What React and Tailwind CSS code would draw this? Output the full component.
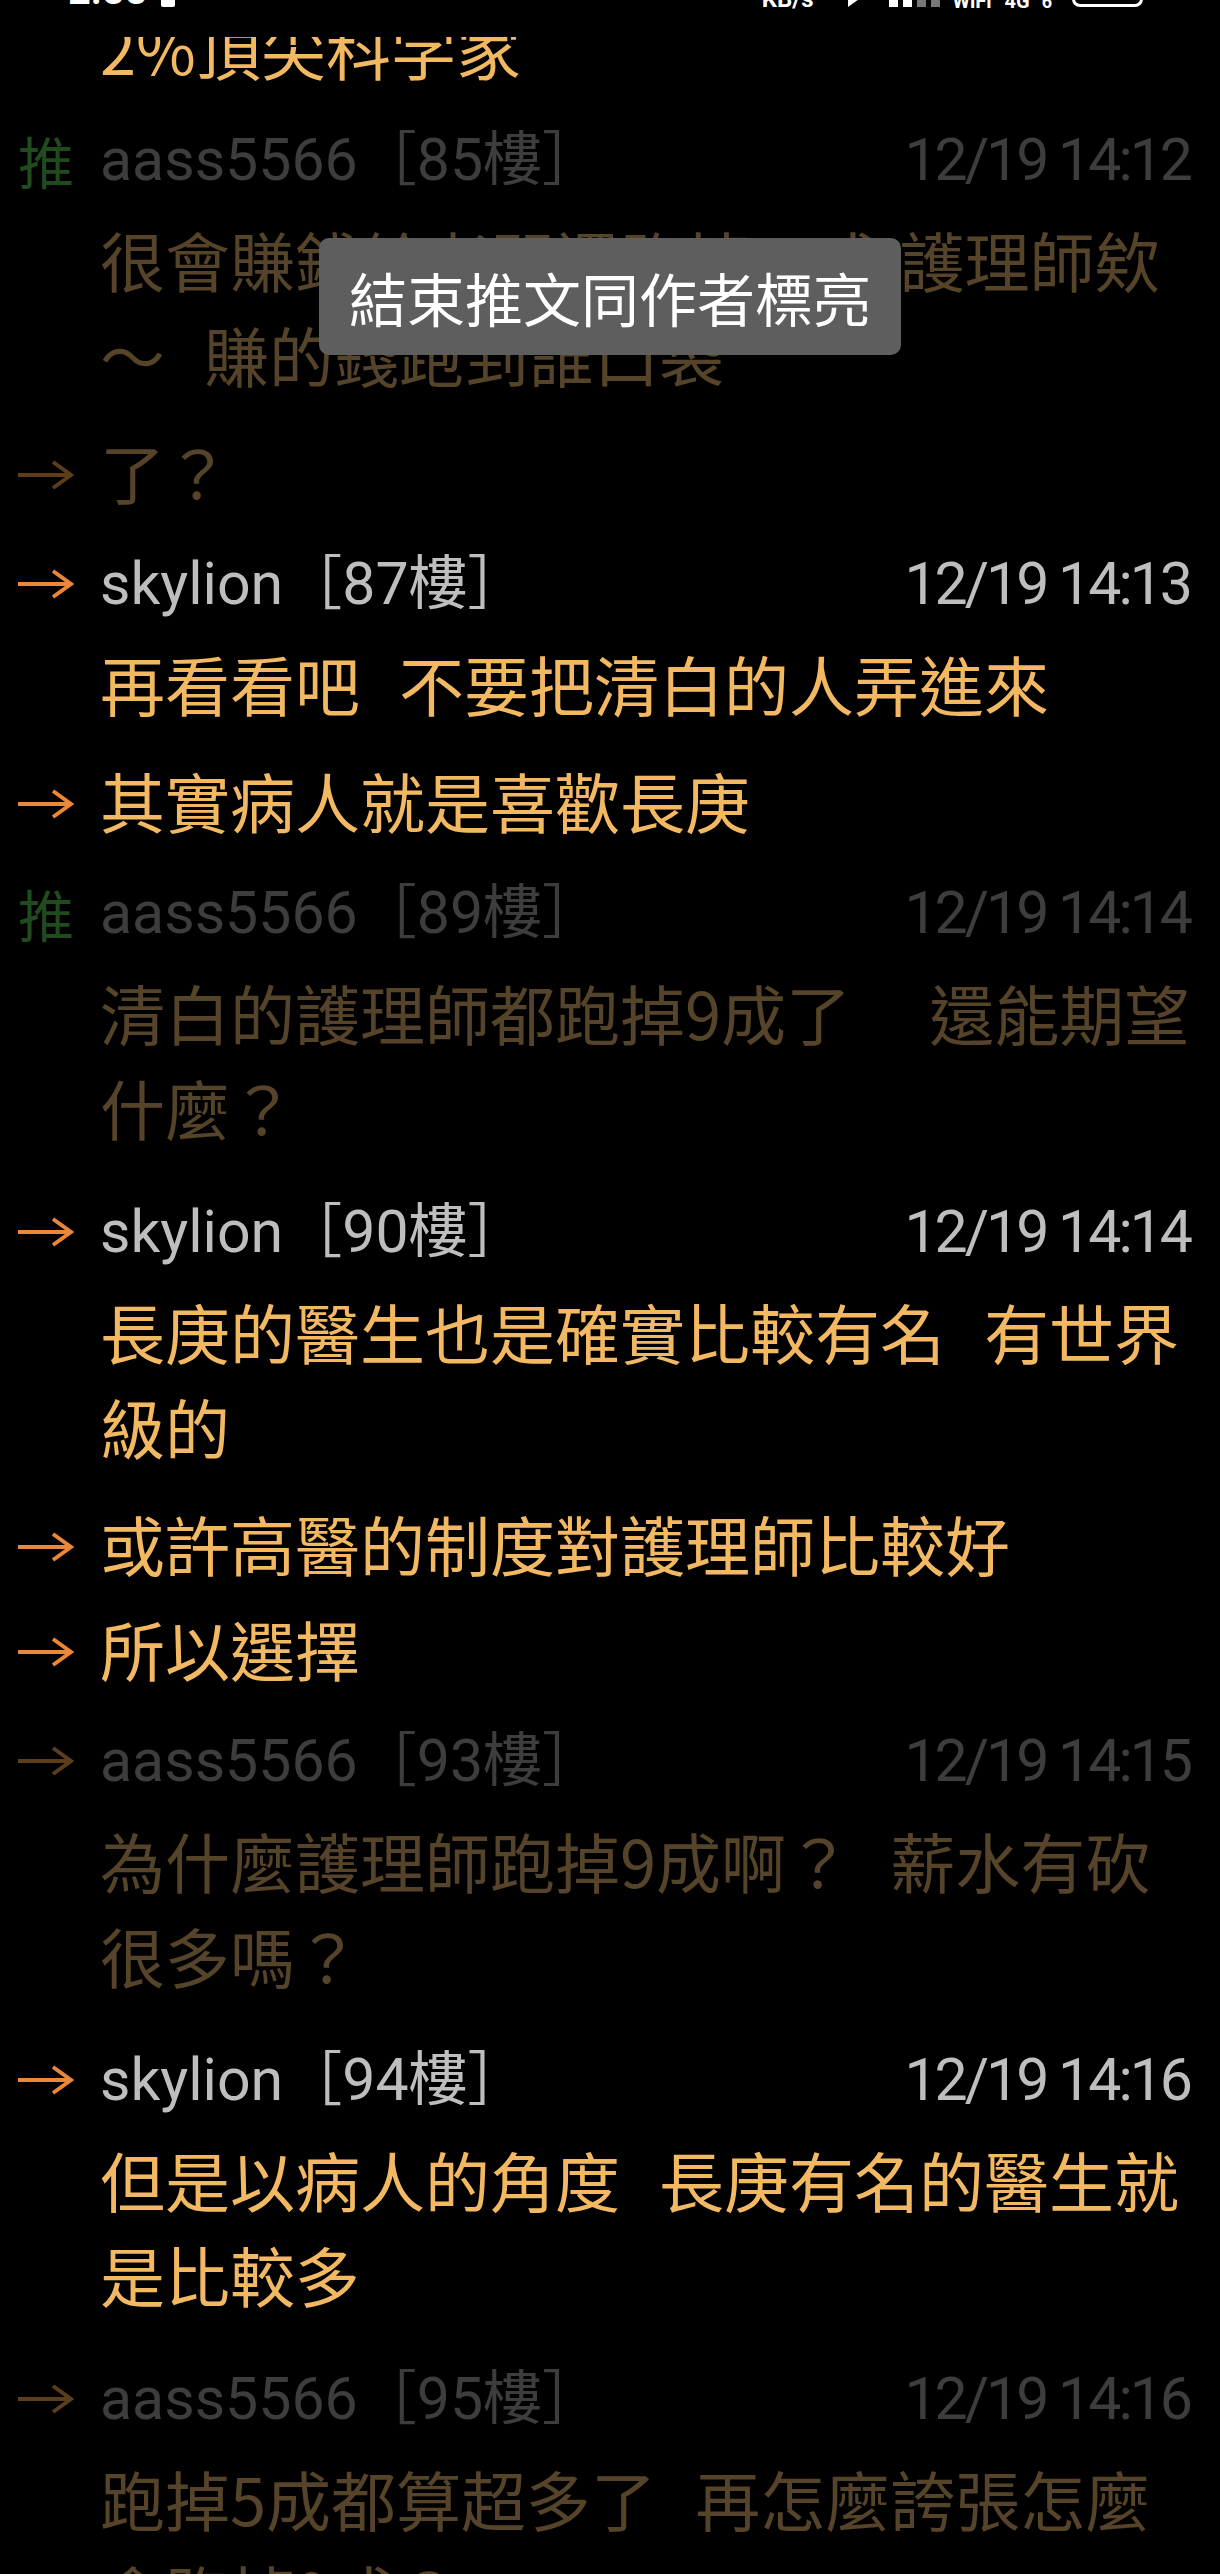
import React from "react";

const CJK = "font-['Noto_Sans_CJK_TC',sans-serif]";
const HEAD = "font-['Roboto','Noto_Sans_CJK_TC',sans-serif]";

// 推文列表：post = 有標頭的推文，cont = 接續的 → 行
const FEED = [
  { type: "cont", mark: null, dim: false, text: "2%頂尖科学家" },
  {
    type: "post",
    mark: "推",
    dim: true,
    user: "aass5566",
    floor: 85,
    time: "12/19 14:12",
    text: "很會賺錢給老闆還跑掉一成 護理師欸～  賺的錢跑到誰口袋",
  },
  { type: "cont", mark: "→", dim: true, text: "了？" },
  {
    type: "post",
    mark: "→",
    dim: false,
    user: "skylion",
    floor: 87,
    time: "12/19 14:13",
    text: "再看看吧  不要把清白的人弄進來",
  },
  { type: "cont", mark: "→", dim: false, text: "其實病人就是喜歡長庚" },
  {
    type: "post",
    mark: "推",
    dim: true,
    user: "aass5566",
    floor: 89,
    time: "12/19 14:14",
    text: "清白的護理師都跑掉9成了    還能期望什麼？",
  },
  {
    type: "post",
    mark: "→",
    dim: false,
    user: "skylion",
    floor: 90,
    time: "12/19 14:14",
    text: "長庚的醫生也是確實比較有名  有世界級的",
  },
  { type: "cont", mark: "→", dim: false, text: "或許高醫的制度對護理師比較好" },
  { type: "cont", mark: "→", dim: false, text: "所以選擇" },
  {
    type: "post",
    mark: "→",
    dim: true,
    user: "aass5566",
    floor: 93,
    time: "12/19 14:15",
    text: "為什麼護理師跑掉9成啊？  薪水有砍很多嗎？",
  },
  {
    type: "post",
    mark: "→",
    dim: false,
    user: "skylion",
    floor: 94,
    time: "12/19 14:16",
    text: "但是以病人的角度  長庚有名的醫生就是比較多",
  },
  {
    type: "post",
    mark: "→",
    dim: true,
    user: "aass5566",
    floor: 95,
    time: "12/19 14:16",
    text: "跑掉5成都算超多了  再怎麼誇張怎麼會跑掉9成？",
  },
];

function Arrow({ dim }) {
  return (
    <svg
      width="56"
      height="30"
      viewBox="0 0 56 30"
      fill="none"
      strokeWidth="4"
      className={dim ? "stroke-[#5c3f1a]" : "stroke-[#ec8737]"}
    >
      <path d="M0 15H53M35 2L53 15L35 28" />
    </svg>
  );
}

function Marker({ mark, dim }) {
  if (!mark) return null;
  if (mark === "推") {
    return <span className={`${CJK} text-[56px] leading-none text-[#1f4b1f]`}>推</span>;
  }
  return <Arrow dim={dim} />;
}

function Body({ text, dim, className = "" }) {
  return (
    <p
      className={`${CJK} ${className} whitespace-pre-wrap text-[65px] leading-[95px] [word-spacing:5px] ${
        dim ? "text-[#55432a]" : "text-[#f3b862]"
      }`}
    >
      {text}
    </p>
  );
}

function Post({ item }) {
  return (
    <div className="flex pt-[15px] pb-[22px]">
      <div className="flex h-[80px] w-[100px] shrink-0 items-center pl-[18px]">
        <Marker mark={item.mark} dim={item.dim} />
      </div>
      <div className="min-w-0 flex-1 pr-[20px]">
        <div
          className={`${HEAD} flex h-[80px] items-center justify-between pr-[10px] text-[59px] leading-[80px] ${
            item.dim ? "text-[#3d3d3d]" : "text-[#bebebe]"
          }`}
        >
          <span>
            {item.user}［{item.floor}樓］
          </span>
          <span className="tracking-[-3px]">{item.time}</span>
        </div>
        <Body text={item.text} dim={item.dim} className="mt-[12px]" />
      </div>
    </div>
  );
}

function Cont({ item }) {
  return (
    <div className="flex pb-[10px]">
      <div className="flex h-[95px] w-[100px] shrink-0 items-center pl-[18px] pt-[7px]">
        <Marker mark={item.mark} dim={item.dim} />
      </div>
      <Body text={item.text} dim={item.dim} className="min-w-0 flex-1 pr-[20px]" />
    </div>
  );
}

function StatusBar() {
  // 畫面頂端被裁切的狀態列，只露出字的底部
  return (
    <div className="absolute inset-x-0 top-0 h-[37px] overflow-hidden bg-black">
      <div className="flex h-[11px] items-end text-white">
        <span className={`${HEAD} ml-[68px] text-[40px] font-semibold leading-none`}>2:55</span>
        <span className="mb-[4px] ml-[14px] h-[20px] w-[14px] rounded-[2px] bg-white" />
        <div className="flex-1" />
        <span className={`${HEAD} text-[24px] font-bold leading-none`}>KB/s</span>
        <svg width="14" height="20" viewBox="0 0 14 20" className="mb-[4px] ml-[34px] fill-white">
          <path d="M0 0L14 10L0 20Z" />
        </svg>
        <svg width="54" height="24" viewBox="0 0 54 24" className="mb-[4px] ml-[27px]">
          <rect x="0" y="16" width="9" height="8" className="fill-white" />
          <rect x="14" y="10" width="9" height="14" className="fill-white" />
          <rect x="28" y="4" width="9" height="20" className="fill-[#777]" />
          <rect x="42" y="0" width="9" height="24" className="fill-[#777]" />
        </svg>
        <span className={`${HEAD} ml-[10px] text-[20px] font-bold leading-none`}>WiFi</span>
        <span className={`${HEAD} ml-[13px] text-[20px] font-bold leading-none`}>4G</span>
        <span className={`${HEAD} ml-[12px] text-[18px] font-bold leading-none`}>6</span>
        <span className="mb-[4px] ml-[20px] mr-[77px] h-[30px] w-[71px] rounded-[8px] border-[3px] border-white" />
      </div>
    </div>
  );
}

export default function App() {
  return (
    <div className="relative h-[2574px] w-full overflow-hidden bg-black">
      <div className="flex flex-col">
        {FEED.map((item, i) =>
          item.type === "post" ? <Post key={i} item={item} /> : <Cont key={i} item={item} />
        )}
      </div>

      <StatusBar />

      <div
        className={`${CJK} absolute left-1/2 top-[238px] flex h-[117px] w-[582px] -translate-x-1/2 items-center justify-center rounded-[10px] bg-[#5e5e5f] text-[58px] leading-none text-white`}
      >
        結束推文同作者標亮
      </div>
    </div>
  );
}
